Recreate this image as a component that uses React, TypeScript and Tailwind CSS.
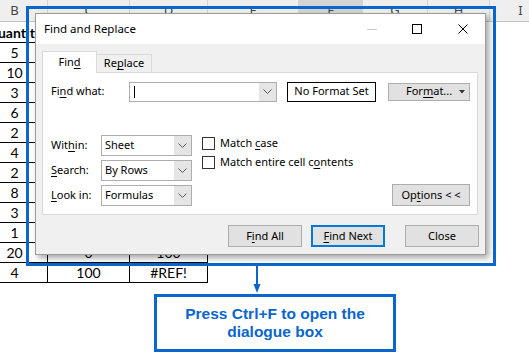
import React from "react";

const U = ({ children }: { children: React.ReactNode }) => (
  <span className="underline underline-offset-[2px] decoration-[1px]">{children}</span>
);

const Chevron = () => (
  <svg width="9" height="5" viewBox="0 0 9 5">
    <path d="M0.5 0.5 L4.5 4.5 L8.5 0.5" fill="none" stroke="#5a5a5a" strokeWidth="1" />
  </svg>
);

function Select({ value }: { value: string }) {
  return (
    <div className="flex w-[91px] h-[21px] border border-[#acacac] bg-white">
      <div className="flex-1 flex items-center pl-[3px]">{value}</div>
      <div className="w-[17px] bg-[#e5e5e5] flex items-center justify-center">
        <Chevron />
      </div>
    </div>
  );
}

function Btn({ children, focused }: { children: React.ReactNode; focused?: boolean }) {
  return (
    <div
      className={
        focused
          ? "w-[74px] h-[22px] flex items-center justify-center bg-[#e1e1e1] border-2 border-[#0078d7]"
          : "w-[74px] h-[22px] flex items-center justify-center bg-[#e1e1e1] border border-[#adadad]"
      }
    >
      {children}
    </div>
  );
}

const headerCols = [
  { l: "B", w: "w-[66px]" },
  { l: "C", w: "w-[82px]" },
  { l: "D", w: "w-[78px]" },
  { l: "E", w: "w-[91px]" },
  { l: "F", w: "w-[64px]", sel: true },
  { l: "G", w: "w-[65px]" },
  { l: "H", w: "w-[62px]" },
  { l: "I", w: "w-[62px]" },
];

const rows: [string, string, string][] = [
  ["Quantity", "", ""],
  ["5", "", ""],
  ["10", "", ""],
  ["3", "", ""],
  ["6", "", ""],
  ["2", "", ""],
  ["4", "", ""],
  ["2", "", ""],
  ["8", "", ""],
  ["3", "", ""],
  ["1", "", ""],
  ["20", "0", "100"],
  ["4", "100", "#REF!"],
];

export default function App() {
  return (
    <div className="relative w-[529px] h-[363px] overflow-hidden bg-white">
      {/* spreadsheet */}
      <div className="ml-[-18px] flex flex-col font-['Lato',sans-serif] text-[14px] text-black">
        <div className="flex h-[22px] bg-[#efefef] border-b border-[#c4c4c4]">
          {headerCols.map((c) => (
            <div
              key={c.l}
              className={
                (c.sel ? "bg-[#d4d4d4] " : "") +
                c.w +
                " shrink-0 flex items-center justify-center border-r border-[#d4d4d4] font-['Noto_Sans',sans-serif] text-[13px] text-[#444]"
              }
            >
              {c.l}
            </div>
          ))}
        </div>
        {rows.map((r, i) => (
          <div key={i} className={i === 0 ? "flex h-[21px]" : "flex h-[20px]"}>
            <div
              className={
                "w-[66px] shrink-0 flex items-center justify-center border-r border-b border-black whitespace-nowrap overflow-hidden" +
                (i === 0 ? " font-bold" : "")
              }
            >
              {r[0]}
            </div>
            <div className="w-[82px] shrink-0 flex items-center justify-center border-r border-b border-black">
              {r[1]}
            </div>
            <div className="w-[78px] shrink-0 flex items-center justify-center border-r border-b border-black">
              {r[2]}
            </div>
          </div>
        ))}
      </div>

      {/* blue highlight frame with dialog */}
      <div className="absolute left-[26px] top-[6px] w-[470px] h-[260px] border-[3px] border-[#0a66cc] pl-[6px] pt-[4px]">
        <div className="w-[451px] h-[242px] flex flex-col border border-[#9c9c9c] bg-[#f0f0f0] shadow-[3px_3px_6px_rgba(0,0,0,0.35)] font-['Noto_Sans',sans-serif] text-[11px] text-black">
          {/* title bar */}
          <div className="h-[30px] bg-white flex items-center pl-[8px]">
            <span className="text-[11.5px]">Find and Replace</span>
            <div className="ml-auto flex items-center pr-[17px]">
              <div className="w-[10px] h-px bg-[#c6c6c6]" />
              <div className="w-[10px] h-[10px] border border-black ml-[35px]" />
              <svg width="10" height="10" viewBox="0 0 10 10" className="ml-[36px]">
                <path d="M0.5 0.5 L9.5 9.5 M9.5 0.5 L0.5 9.5" stroke="#000" strokeWidth="1" />
              </svg>
            </div>
          </div>
          {/* body */}
          <div className="flex flex-col pl-[6px] pt-[7px]">
            <div className="flex items-end h-[21px]">
              <div className="relative z-10 w-[55px] h-[22px] -mb-px bg-white border border-b-0 border-[#d9d9d9] flex items-center justify-center">
                <span>
                  Fin<U>d</U>
                </span>
              </div>
              <div className="w-[55px] h-[18px] border border-l-0 border-b-0 border-[#d9d9d9] flex items-center justify-center">
                <span>
                  Re<U>p</U>lace
                </span>
              </div>
            </div>
            <div className="w-[436px] h-[143px] bg-white border border-[#d9d9d9] pl-[8px] pt-[9px] pr-[7px] flex flex-col">
              <div className="flex items-center h-[19px]">
                <div className="w-[78px]">
                  Fi<U>n</U>d what:
                </div>
                <div className="flex w-[148px] h-[20px] border border-[#acacac] bg-white">
                  <div className="flex-1 flex items-center pl-[4px]">
                    <div className="w-px h-[12px] bg-black" />
                  </div>
                  <div className="w-[17px] bg-[#e5e5e5] flex items-center justify-center">
                    <Chevron />
                  </div>
                </div>
                <div className="ml-[10px] w-[89px] h-[20px] border border-black bg-white flex items-center justify-center">
                  No Format Set
                </div>
                <div className="ml-[12px] w-[82px] h-[18px] border border-[#adadad] bg-[#e1e1e1] flex items-center pl-[17px] pr-[4px]">
                  <span>
                    For<U>m</U>at...
                  </span>
                  <svg width="6" height="4" viewBox="0 0 6 4" className="ml-auto">
                    <path d="M0 0 L6 0 L3 3.5 Z" fill="#333" />
                  </svg>
                </div>
              </div>
              <div className="flex mt-[34px]">
                <div className="flex flex-col gap-[4px]">
                  <div className="flex items-center">
                    <div className="w-[50px]">
                      Wit<U>h</U>in:
                    </div>
                    <Select value="Sheet" />
                  </div>
                  <div className="flex items-center">
                    <div className="w-[50px]">
                      <U>S</U>earch:
                    </div>
                    <Select value="By Rows" />
                  </div>
                  <div className="flex items-center">
                    <div className="w-[50px]">
                      <U>L</U>ook in:
                    </div>
                    <Select value="Formulas" />
                  </div>
                </div>
                <div className="flex flex-col gap-[6px] ml-[10px] pt-[2px]">
                  <div className="flex items-center h-[13px]">
                    <div className="w-[13px] h-[13px] border border-[#333] bg-white" />
                    <span className="ml-[5px]">
                      Match <U>c</U>ase
                    </span>
                  </div>
                  <div className="flex items-center h-[13px]">
                    <div className="w-[13px] h-[13px] border border-[#333] bg-white" />
                    <span className="ml-[5px]">
                      Match entire cell c<U>o</U>ntents
                    </span>
                  </div>
                </div>
                <div className="ml-auto self-end w-[78px] h-[22px] border border-[#adadad] bg-[#e1e1e1] flex items-center justify-center">
                  <span>
                    Op<U>t</U>ions &lt; &lt;
                  </span>
                </div>
              </div>
            </div>
            <div className="flex justify-end w-[437px] mt-[10px]">
              <Btn>
                F<U>i</U>nd All
              </Btn>
              <div className="ml-[9px]">
                <Btn focused>
                  <U>F</U>ind Next
                </Btn>
              </div>
              <div className="ml-[20px]">
                <Btn>Close</Btn>
              </div>
            </div>
          </div>
        </div>
      </div>

      {/* callout */}
      <div className="absolute left-[154px] top-[265px] flex flex-col">
        <svg width="10" height="29" viewBox="0 0 10 29" className="ml-[98px]">
          <path d="M5 0 L5 20" stroke="#0a66cc" strokeWidth="2" />
          <path d="M1.5 19 L8.5 19 L5 28 Z" fill="#0a66cc" />
        </svg>
        <div className="w-[242px] h-[58px] border-[3px] border-[#0a66cc] bg-white flex flex-col items-center justify-center font-['Liberation_Sans',Arial,sans-serif] font-bold text-[15.5px] leading-[18px] text-[#0a66cc]">
          <div>Press Ctrl+F to open the</div>
          <div>dialogue box</div>
        </div>
      </div>
    </div>
  );
}
